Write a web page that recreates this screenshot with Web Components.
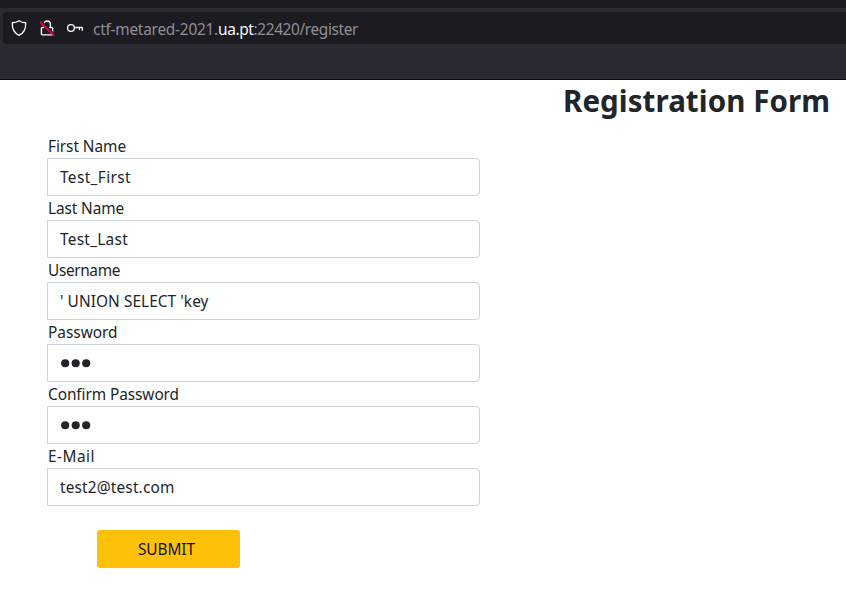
<!DOCTYPE html>
<html lang="en">
<head>
<meta charset="utf-8">
<title>Registration Form</title>
<style>
html,body{margin:0;height:100%;background:#fff;overflow:hidden}
body{font:15.4px/24px "Noto Sans","Open Sans",sans-serif;color:#212529}
</style>
</head>
<body>
<browser-bar></browser-bar>
<registration-page>
  <form-field label="First Name" lw="78" value="Test_First" vw="71"></form-field>
  <form-field label="Last Name" lw="76" value="Test_Last" vw="68"></form-field>
  <form-field label="Username" lw="72" value="' UNION SELECT 'key" vw="148.5"></form-field>
  <form-field label="Password" lw="69.5" dots="3"></form-field>
  <form-field label="Confirm Password" lw="131" dots="3"></form-field>
  <form-field label="E-Mail" lw="47" value="test2@test.com" vw="114.5"></form-field>
</registration-page>
<script>
// Text run whose tracking is adjusted so that it fills a given width.
class FitText extends HTMLElement{
  connectedCallback(){
    const root=this.attachShadow({mode:'open'});
    root.innerHTML='<style>:host{display:inline-block;white-space:pre;vertical-align:top}span{display:inline-block;font-kerning:normal}</style><span></span>';
    const s=root.querySelector('span'),t=this.getAttribute('text'),w=+this.getAttribute('w');
    s.textContent=t;
    this.style.width=w+'px';
    s.style.letterSpacing=((w-s.getBoundingClientRect().width)/t.length)+'px';
  }
}
customElements.define('fit-text',FitText);

class BrowserBar extends HTMLElement{
  connectedCallback(){
    this.attachShadow({mode:'open'}).innerHTML=`<style>
    :host{display:block;box-sizing:border-box;height:80px;background:#2b2a33;border-top:8px solid #1c1b22;border-bottom:1px solid #0c0c0d;padding:4px 0 0 3px}
    .url{display:flex;align-items:center;height:32px;background:#1c1b22;border-radius:4px 0 0 4px;padding-left:8px;color:#8f8f94}
    svg{display:block;flex:none;fill:none;stroke:#fbfbfe;stroke-width:1.35;stroke-linecap:round;stroke-linejoin:round}
    .shield{width:16px;height:18px;margin-right:12px}.lock{width:16px;height:18px;margin-right:11px}.key{width:18px;height:18px;margin-right:9px}
    .addr{display:flex;line-height:35px;height:32px}
    .host{color:#fbfbfe}
    </style><div class="url">
    <svg class="shield" viewBox="0 0 16 18"><path d="M8 1.7C6.2 3.1 3.8 3.7 1.3 3.7c-.3 6 1.5 10.2 6.7 12.6 5.2-2.4 7-6.6 6.7-12.6C12.2 3.7 9.8 3.1 8 1.7z"/></svg>
    <svg class="lock" viewBox="0 0 16 18"><path d="M5 4.3C5.5 2.7 6.5 2 8 2c2.2 0 3.4 1.3 3.4 3.5V8.2M4.5 8.5H3.4c-.6 0-1 .4-1 1v5.3c0 .6.4 1 1 1h9.2c.6 0 1-.4 1-1V9.5c0-.6-.4-1-1-1h-2"/><path stroke="#1c1b22" stroke-width="1.4" d="M2.7 2.4l12.5 12.6"/><path stroke="#ff0039" stroke-width="1.7" d="M1.6 3.4l13 12.8"/></svg>
    <svg class="key" viewBox="0 0 18 18"><circle cx="5" cy="9" r="3.4"/><path d="M8.7 8.5H16.3V11.3M13.4 8.5V10.5"/></svg>
    <div class="addr"><fit-text text="ctf-metared-2021." w="125"></fit-text><fit-text class="host" text="ua.pt" w="35.5"></fit-text><fit-text text=":22420/register" w="104.5"></fit-text></div>
    </div>`;
  }
}
customElements.define('browser-bar',BrowserBar);

class FormField extends HTMLElement{
  connectedCallback(){
    const n=+this.getAttribute('dots')||0;
    this.attachShadow({mode:'open'}).innerHTML=`<style>
    :host{display:block;width:433px}
    .label{box-sizing:border-box;height:24px;padding:1px 0 0 1px}
    .box{box-sizing:border-box;height:38px;border:1px solid #ced4da;border-radius:0 4px 4px 0;padding:7px 12px 5px;display:flex;align-items:center}
    svg{display:block;fill:#212529;margin-bottom:2px}
    </style><div class="label"><fit-text text="${this.getAttribute('label')}" w="${this.getAttribute('lw')}"></fit-text></div><div class="box"></div>`;
    const box=this.shadowRoot.querySelector('.box');
    if(n){
      box.innerHTML='<svg width="34" height="10" viewBox="0 0 34 10">'+Array.from({length:n},(_,i)=>`<circle cx="${5.2+i*10.5}" cy="5.2" r="4.05"/>`).join('')+'</svg>';
    }else{
      box.innerHTML=`<fit-text text="${this.getAttribute('value')}" w="${this.getAttribute('vw')}"></fit-text>`;
    }
  }
}
customElements.define('form-field',FormField);

class SubmitButton extends HTMLElement{
  connectedCallback(){
    this.attachShadow({mode:'open'}).innerHTML=`<style>
    :host{display:block}
    button{display:flex;justify-content:center;align-items:center;width:143px;height:38px;border:0;border-radius:3px;background:#ffc107;color:#111;font:inherit;padding:2px 4px 0 0}
    </style><button type="button"><fit-text text="SUBMIT" w="57"></fit-text></button>`;
  }
}
customElements.define('submit-button',SubmitButton);

class RegistrationPage extends HTMLElement{
  connectedCallback(){
    this.attachShadow({mode:'open'}).innerHTML=`<style>
    :host{display:block}
    h2{margin:0;height:54px;display:flex;justify-content:flex-end;padding-right:16px;box-sizing:border-box;font-size:29.5px;line-height:42px;font-weight:700}
    form{padding-left:47px}
    submit-button{margin:24px 0 0 50px}
    </style><h2><fit-text text="Registration Form" w="267"></fit-text></h2><form><slot></slot><submit-button></submit-button></form>`;
  }
}
customElements.define('registration-page',RegistrationPage);
</script>
</body>
</html>
